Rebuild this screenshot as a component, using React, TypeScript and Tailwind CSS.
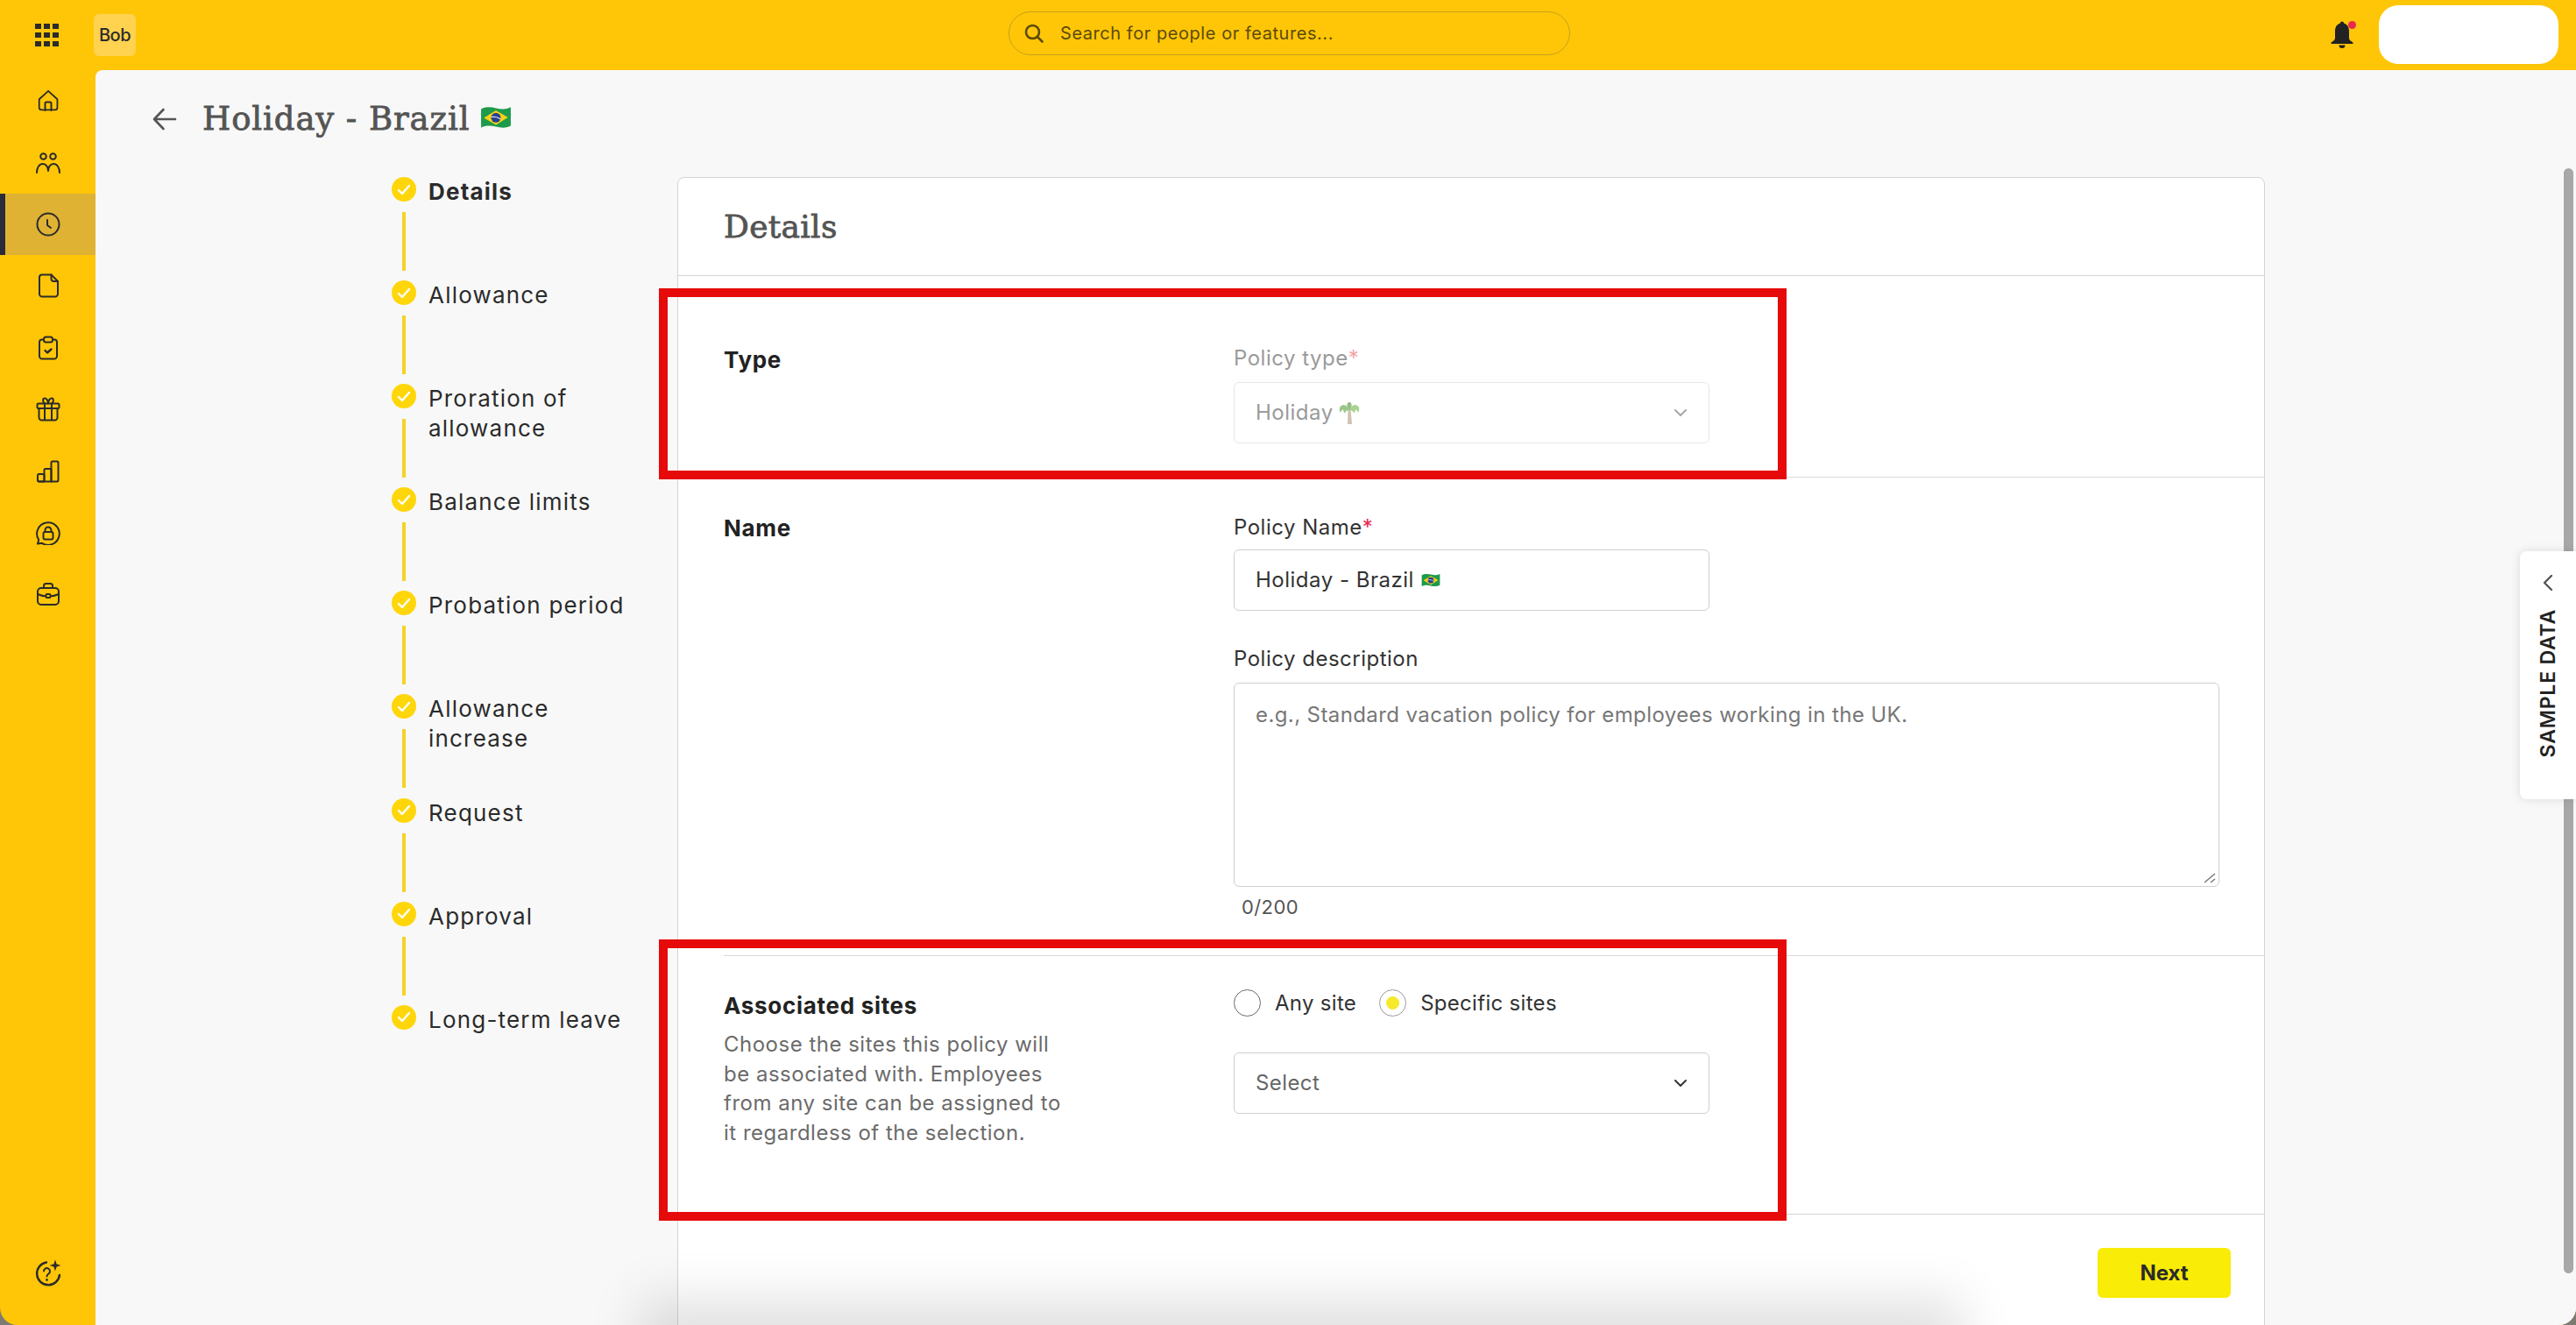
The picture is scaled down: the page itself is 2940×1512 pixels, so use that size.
// App.tsx
import type { ReactNode } from 'react';

const bodyFont = "font-['Inter',sans-serif]";
const serifFont = "font-['DejaVu_Serif',serif]";

function Icon({ size = 28, children }: { size?: number; children: ReactNode }) {
  return (
    <svg width={size} height={size} viewBox="0 0 28 28" fill="none" stroke="#2b2b2b" strokeWidth="2" strokeLinecap="round" strokeLinejoin="round">
      {children}
    </svg>
  );
}

const navIcons: ReactNode[] = [
  <Icon key="home">
    <path d="M2.5 12.5 14 2l11.500 10.500V23a3 3 0 0 1-3 3h-17a3 3 0 0 1-3-3z" transform="translate(1.500 1) scale(.9)" />
    <path d="M10.500 25V17a1.500 1.500 0 0 1 1.500-1.500h4a1.500 1.500 0 0 1 1.500 1.500v8" />
  </Icon>,
  <Icon key="people">
    <circle cx="8.500" cy="6.500" r="3.300" />
    <circle cx="19.500" cy="6.500" r="3.300" />
    <path d="M1 25c0-6 3-10 7-10 3.500 0 6 3.500 6 8 0-4.500 2.500-8 6-8 4 0 7 4 7 10" />
  </Icon>,
  <Icon key="clock">
    <circle cx="14" cy="14" r="12.500" />
    <path d="M13 9v6l4 3" />
  </Icon>,
  <Icon key="file">
    <path d="M7 1.500h10.500L25 9v14.500a3 3 0 0 1-3 3H7a3 3 0 0 1-3-3v-19a3 3 0 0 1 3-3z" />
    <path d="M17.500 1.500V6a3 3 0 0 0 3 3H25" />
  </Icon>,
  <Icon key="clipboard">
    <path d="M9 4.500H7a3 3 0 0 0-3 3v16a3 3 0 0 0 3 3h14a3 3 0 0 0 3-3v-16a3 3 0 0 0-3-3h-2" />
    <rect x="9" y="1.500" width="10" height="6" rx="2.500" />
    <path d="m10.500 17 2.500 2.500 4.500-4" strokeWidth="2.400" />
  </Icon>,
  <Icon key="gift">
    <rect x="1.500" y="7.500" width="25" height="5.500" rx="1.500" />
    <path d="M3.500 13v10.500a3 3 0 0 0 3 3h15a3 3 0 0 0 3-3V13M10 7.500v19M18 7.500v19" />
    <path d="M14 7.500C13.500 3.500 12 1.500 10 1.500 7.500 1.500 7.500 6 10 7.500M14 7.500c.5-4 2-6 4-6 2.500 0 2.500 4.500 0 6" />
  </Icon>,
  <Icon key="chart">
    <rect x="2" y="17" width="7.500" height="8.500" rx="1.500" />
    <path d="M9.500 25.500V12.500A1.500 1.500 0 0 1 11 11h5a1.500 1.500 0 0 1 1.500 1.500v13" />
    <path d="M17.500 25.500V4A1.500 1.500 0 0 1 19 2.500h5A1.500 1.500 0 0 1 25.500 4v20a1.500 1.500 0 0 1-1.500 1.500H3.500" />
  </Icon>,
  <Icon key="lock">
    <path d="M2 25.500 3.200 21A12.800 12.800 0 1 1 7 24.800z" transform="translate(0 1)" />
    <rect x="8.500" y="13" width="11" height="8.500" rx="2" />
    <path d="M10.500 13v-2a3.500 3.500 0 0 1 7 0v2" />
  </Icon>,
  <Icon key="case">
    <rect x="2" y="7" width="24" height="19" rx="4" />
    <path d="M9 7V4.500A2.500 2.500 0 0 1 11.500 2h5A2.500 2.500 0 0 1 19 4.500V7M2 14c4 2 8 2.500 12 2.500S22 16 26 14" />
    <rect x="11.500" y="14" width="5" height="4" rx="1" fill="#FFC607" />
  </Icon>,
];

const steps: string[] = ['Details', 'Allowance', 'Proration of allowance', 'Balance limits', 'Probation period', 'Allowance increase', 'Request', 'Approval', 'Long-term leave'];

function BrazilFlag({ w, h }: { w: number; h: number }) {
  return (
    <svg width={w} height={h} viewBox="0 0 34 24">
      <path d="M1 3c6-3 11-2 16-1s10 2 16-1v20c-6 3-11 2-16 1S7 20 1 23z" fill="#1E9A4B" />
      <path d="M17 4.500 30 12 17 20 4 12.500z" fill="#F7D117" />
      <circle cx="17" cy="12.300" r="5.200" fill="#27408F" />
      <path d="M12 11.500c3.500-.6 7 .3 10 2.200" stroke="#fff" strokeWidth="1" fill="none" />
    </svg>
  );
}

function PalmTree() {
  return (
    <svg width="24" height="26" viewBox="0 0 24 26" className="opacity-60">
      <path d="M10.500 9h3l1.500 17h-5z" fill="#B39A80" />
      <path d="M12 10C9 3 4 2 1 7c-.5 2 0 4 1 6 1-3 2-3.500 3-3.500.5 2 1 3 1.500 4C8 11 9.500 10 12 10z" fill="#5DA13C" />
      <path d="M12 10c3-7 8-8 11-3 .5 2 0 4-1 6-1-3-2-3.500-3-3.500-.5 2-1 3-1.500 4-1.500-2.500-3-3.500-5.500-3.500z" fill="#6FB548" />
      <path d="M12 10C8 5 9 2 12 .500 15 2 16 5 12 10z" fill="#4E9433" />
    </svg>
  );
}

function Chevron({ color }: { color: string }) {
  return (
    <svg width="16" height="10" viewBox="0 0 16 10" fill="none" stroke={color} strokeWidth="2" strokeLinecap="round" strokeLinejoin="round">
      <path d="m2 2 6 6 6-6" />
    </svg>
  );
}

function FormRow({ children, className }: { children: ReactNode; className: string }) {
  return <div className={`grid grid-cols-[582px_1125px] border-b border-[#d9d9d9] ${className}`}>{children}</div>;
}

function Radio({ checked, label }: { checked?: boolean; label: string }) {
  return (
    <div className="flex h-[31px] items-center gap-[16px]">
      <span className={`flex size-[31px] items-center justify-center rounded-full border-[1.5px] ${checked ? 'border-[#9a9a9a]' : 'border-[#6b6b6b]'}`}>
        {checked && <span className="size-[15px] rounded-full bg-[#F7E92B]" />}
      </span>
      <span className="text-[24px] tracking-[0.3px] text-[#333]">{label}</span>
    </div>
  );
}

export default function App() {
  return (
    <div className={`relative flex h-screen w-screen flex-col overflow-hidden bg-[#7d7a72] ${bodyFont}`}>
      <div className="flex h-full flex-col overflow-hidden rounded-b-[20px] bg-[#FFC607]">
        {/* top bar */}
        <header className="flex h-[80px] shrink-0 items-center">
          <div className="flex w-[107px] justify-center pl-[0px]">
            <div className="grid grid-cols-3 gap-[3.500px]">
              {Array.from({ length: 9 }).map((_, i) => (
                <span key={i} className="size-[6.500px] bg-[#2b2b2b]" />
              ))}
            </div>
          </div>
          <div className="flex size-[48px] items-center justify-center rounded-[6px] bg-[#FFD24F] text-[20px] font-medium tracking-[-0.5px] text-[#2b2b2b]">Bob</div>
          <div className="ml-[996px] flex h-[50px] w-[641px] -translate-y-[2px] items-center rounded-full border border-[#C99F1E] pl-[17px]">
            <svg width="22" height="22" viewBox="0 0 22 22" fill="none" stroke="#5c4a08" strokeWidth="2.600" strokeLinecap="round">
              <circle cx="9.500" cy="9.500" r="7.500" />
              <path d="m15 15 5.500 5.500" />
            </svg>
            <span className="ml-[19px] text-[20px] tracking-[0.55px] text-[#5c4a08]">Search for people or features...</span>
          </div>
          <div className="relative ml-[868px]">
            <svg width="26" height="32" viewBox="0 0 26 32" fill="#222">
              <path d="M13 .500c1.300 0 2.200 1 2.300 2.300C19.500 4 21 7.500 21 12v7.500c0 2 2 3.500 4.500 5V26H.500v-1.500c2.500-1.500 4.500-3 4.500-5V12c0-4.500 1.500-8 5.700-9.200C10.800 1.500 11.700.500 13 .500z" />
              <path d="M9.500 27.500h7a3.500 3.500 0 0 1-7 0z" />
            </svg>
            <span className="absolute -right-[3px] top-0 size-[9px] rounded-full bg-[#E8284F]" />
          </div>
          <div className="ml-[29px] h-[67px] w-[205px] -translate-y-[1px] rounded-[22px] bg-white" />
        </header>

        <div className="flex min-h-0 flex-1">
          {/* side nav */}
          <nav className="flex w-[109px] shrink-0 flex-col">
            {navIcons.map((icon, i) => (
              <div key={i} className={`flex h-[70.4px] items-center justify-center ${i === 2 ? 'border-l-[6px] border-[#2a2a38] bg-[#DFB234] pr-[6px]' : ''}`}>
                {icon}
              </div>
            ))}
            <div className="mt-auto mb-[43px] flex justify-center">
              <svg width="32" height="32" viewBox="0 0 32 32" fill="none" stroke="#2b2b2b" strokeWidth="2.400" strokeLinecap="round">
                <path d="M14 3.500A13 13 0 1 0 29 18" />
                <path d="M11 13.500a3.500 3.500 0 1 1 5.500 3c-1.200.8-2 1.500-2 3" strokeWidth="2" />
                <circle cx="14.500" cy="23.500" r=".6" strokeWidth="1.600" />
                <path d="m24 .500 1.600 4.900 4.900 1.600-4.900 1.600L24 13.500l-1.600-4.900L17.500 7l4.900-1.600z" fill="#2b2b2b" stroke="none" />
              </svg>
            </div>
          </nav>

          {/* page */}
          <main className="relative min-w-0 flex-1 rounded-tl-[8px] bg-[#f8f8f8]">
            <div className="flex h-[122px] items-start pl-[65px] pt-[37px]">
              <svg width="28" height="26" viewBox="0 0 28 26" fill="none" stroke="#545454" strokeWidth="2.600" strokeLinecap="round" strokeLinejoin="round" className="mt-[6px]">
                <path d="M26 13H2M12.500 2 2 13l10.500 11" />
              </svg>
              <h1 className={`ml-[29px] text-[37px] leading-[38px] font-normal tracking-[0.9px] text-[#545454] [-webkit-text-stroke:0.8px_#545454] ${serifFont}`}>Holiday - Brazil</h1>
              <span className="mt-[4px] ml-[12px]"><BrazilFlag w={36} h={26} /></span>
            </div>

            <div className="flex items-start">
              {/* stepper */}
              <ol className="ml-[338px] w-[326px] pt-0">
                {steps.map((step, i) => (
                  <li key={step} className="relative flex h-[118.100px] items-start gap-[14px]">
                    <span className="flex size-[28px] shrink-0 items-center justify-center rounded-full bg-[#FFD60A]">
                      <svg width="16" height="13" viewBox="0 0 16 13" fill="none" stroke="#fff" strokeWidth="2.400" strokeLinecap="round" strokeLinejoin="round">
                        <path d="m2 7 4 4 8-9" />
                      </svg>
                    </span>
                    <span className={`w-[250px] text-[26px] leading-[34px] tracking-[1.2px] text-[#2b2b2b] ${i === 0 ? 'font-bold' : ''}`}>{step}</span>
                    {i < steps.length - 1 && <span className="absolute left-[12px] top-[40px] h-[67px] w-[4px] bg-[#F5D327]" />}
                  </li>
                ))}
              </ol>

              {/* card */}
              <section className="h-[1400px] w-[1812px] rounded-t-[8px] border border-[#d4d4d4] bg-white">
                <div className="flex h-[112px] items-center border-b border-[#d4d4d4] pl-[52px]">
                  <h2 className={`text-[36px] font-normal tracking-[0.3px] text-[#545454] [-webkit-text-stroke:0.8px_#545454] ${serifFont}`}>Details</h2>
                </div>
                <div className="pl-[52px]">
                  <FormRow className="h-[230px]">
                    <h3 className="pt-[79px] text-[26px] leading-[34px] font-bold tracking-[0.7px] text-[#222]">Type</h3>
                    <div className="pt-[78px]">
                      <label className="block text-[24px] leading-[32px] tracking-[0.5px] text-[#9a9a9a]">Policy type<span className="text-[#f4a3a9]">*</span></label>
                      <div className="mt-[11px] flex h-[70px] w-[543px] items-center justify-between rounded-[6px] border border-[#e6e6e6] px-[24px] text-[24px] tracking-[0.5px] text-[#9a9a9a]">
                        <span className="flex items-center gap-[6px]">Holiday <PalmTree /></span>
                        <Chevron color="#a8a8a8" />
                      </div>
                    </div>
                  </FormRow>
                  <FormRow className="h-[546px]">
                    <h3 className="pt-[41px] text-[26px] leading-[34px] font-bold tracking-[0.7px] text-[#222]">Name</h3>
                    <div className="pt-[41px]">
                      <label className="block text-[24px] leading-[32px] tracking-[0.5px] text-[#333]">Policy Name<span className="text-[#E8284F]">*</span></label>
                      <div className="mt-[9px] flex h-[70px] w-[543px] items-center gap-[8px] rounded-[6px] border border-[#cfcfcf] pl-[24px] text-[24px] tracking-[0.5px] text-[#333]">
                        Holiday - Brazil <BrazilFlag w={22} h={16} />
                      </div>
                      <label className="mt-[39px] block text-[24px] leading-[32px] tracking-[0.5px] text-[#333]">Policy description</label>
                      <div className="relative mt-[11px] h-[233px] w-[1125px] rounded-[6px] border border-[#cfcfcf] pt-[20px] pl-[24px] text-[24px] leading-[32px] tracking-[0.4px] text-[#777]">
                        e.g., Standard vacation policy for employees working in the UK.
                        <svg width="16" height="16" viewBox="0 0 16 16" stroke="#777" strokeWidth="1.500" className="absolute right-[2px] bottom-[2px]">
                          <path d="M2 14 14 4M9 14l5-4" />
                        </svg>
                      </div>
                      <p className="mt-[9px] pl-[9px] text-[22px] leading-[28px] tracking-[0.4px] text-[#555]">0/200</p>
                    </div>
                  </FormRow>
                  <div className="grid h-[294px] grid-cols-[582px_1125px]">
                    <div className="pt-[40px]">
                      <h3 className="text-[26px] leading-[34px] font-bold tracking-[0.7px] text-[#222]">Associated sites</h3>
                      <p className="mt-[10px] w-[390px] text-[24px] leading-[33.700px] tracking-[0.5px] text-[#6b6b6b]">Choose the sites this policy will be associated with. Employees from any site can be assigned to it regardless of the selection.</p>
                    </div>
                    <div className="pt-[38px]">
                      <div className="flex gap-[26px]">
                        <Radio label="Any site" />
                        <Radio checked label="Specific sites" />
                      </div>
                      <div className="mt-[41px] flex h-[70px] w-[543px] items-center justify-between rounded-[6px] border border-[#cfcfcf] px-[24px] text-[24px] tracking-[0.4px] text-[#666]">
                        Select
                        <Chevron color="#333" />
                      </div>
                    </div>
                  </div>
                </div>
                <div className="flex h-[100px] justify-end border-t border-[#d4d4d4] pt-[38px] pr-[38px]">
                  <button className="h-[57px] w-[152px] rounded-[6px] bg-[#F9EC06] text-[24px] font-bold text-[#2b2b2b]">Next</button>
                </div>
              </section>
            </div>

            {/* scrollbar */}
            <div className="absolute top-0 right-0 bottom-0 w-[16px] bg-[#f8f8f8]">
              <div className="absolute top-[112px] right-[3px] h-[1261px] w-[11px] rounded-full bg-[#a8a8a8]" />
            </div>

            {/* sample data tab */}
            <div className="absolute top-[549px] right-0 flex h-[283px] w-[64px] flex-col items-center rounded-l-[8px] bg-white pt-[26px] shadow-[0_0_12px_rgba(0,0,0,0.12)]">
              <svg width="12" height="20" viewBox="0 0 12 20" fill="none" stroke="#555" strokeWidth="2.400" strokeLinecap="round" strokeLinejoin="round">
                <path d="M10 2 2 10l8 8" />
              </svg>
              <span className="mt-[20px] rotate-180 text-[23px] leading-[24px] font-semibold tracking-[0.8px] text-[#222] [writing-mode:vertical-rl]">SAMPLE DATA</span>
            </div>
          </main>
        </div>
      </div>

      {/* shadow along the bottom edge */}
      <div className="pointer-events-none absolute right-[730px] bottom-[-40px] left-[760px] h-[40px] shadow-[0_0_60px_30px_rgba(0,0,0,0.12)]" />

      {/* review markers */}
      <div className="pointer-events-none absolute top-[329px] left-[752px] h-[218px] w-[1287px] border-[10px] border-[#E60A0A]" />
      <div className="pointer-events-none absolute top-[1072px] left-[752px] h-[321px] w-[1287px] border-[10px] border-[#E60A0A]" />
    </div>
  );
}
